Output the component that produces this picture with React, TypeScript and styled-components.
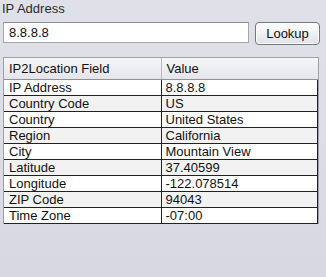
import React, { useState } from 'react';
import styled, { createGlobalStyle } from 'styled-components';

const GlobalStyle = createGlobalStyle`
  html, body {
    margin: 0;
    padding: 0;
    background: #dadbe4;
  }
  body {
    font-family: "Liberation Sans", Arial, sans-serif;
  }
`;

const Page = styled.div`
  width: 326px;
  height: 277px;
  box-sizing: border-box;
  padding: 1px 6px 0 3px;
  background: linear-gradient(#e0e1e8, #d7d8e2);
`;

const FieldLabel = styled.div`
  font-size: 13px;
  line-height: 16px;
  color: #2a2a2a;
  margin-left: -1px;
`;

const SearchRow = styled.div`
  display: flex;
  align-items: flex-start;
  gap: 6px;
  margin-top: 5px;
`;

const IpInput = styled.input`
  box-sizing: border-box;
  width: 246px;
  height: 21px;
  border: 1px solid #a4a6ad;
  border-top-color: #8c8e95;
  background: #fff;
  font-family: "Liberation Sans", Arial, sans-serif;
  font-size: 13px;
  color: #111;
  padding: 0 5px;
  outline: none;
`;

const LookupButton = styled.button`
  box-sizing: border-box;
  width: 65px;
  height: 23px;
  border: 1px solid #6f7888;
  border-radius: 4px;
  background: linear-gradient(#ffffff, #f1f2f5 45%, #dfe1e7);
  box-shadow: inset 0 0 0 1px #fdfdfe;
  font-family: "Liberation Sans", Arial, sans-serif;
  font-size: 13px;
  color: #111;
  padding: 0;
  cursor: pointer;
`;

const TableFrame = styled.div`
  margin-top: 12px;
  width: 316px;
  box-sizing: border-box;
  border: 1px solid #9ea0a8;
  border-bottom: none;
  background: #dadbe4;
`;

const Grid = styled.table`
  width: 314px;
  border-collapse: collapse;
  table-layout: fixed;
  font-size: 13px;
  color: #111;
`;

const HeadCell = styled.th`
  height: 21px;
  padding: 0 0 0 5px;
  text-align: left;
  font-weight: normal;
  background: linear-gradient(#f6f6f8, #e4e5ea);
  border-right: 1px solid #b8bac0;
  border-bottom: 1px solid #8e9097;
  &:last-child {
    border-right: none;
  }
`;

const Row = styled.tr<{ $shade: boolean }>`
  background: ${p => (p.$shade ? '#f2f2f2' : '#ffffff')};
`;

const Cell = styled.td`
  height: 15px;
  padding: 0 0 0 5px;
  line-height: 15px;
  border-bottom: 1px solid #222;
  border-right: 1px solid #222;
  border-left: 1px solid #222;
  white-space: nowrap;
  overflow: hidden;
  &:first-child {
    border-left: none;
  }
  &:last-child {
    padding-left: 4px;
  }
`;

const results: [string, string][] = [
  ['IP Address', '8.8.8.8'],
  ['Country Code', 'US'],
  ['Country', 'United States'],
  ['Region', 'California'],
  ['City', 'Mountain View'],
  ['Latitude', '37.40599'],
  ['Longitude', '-122.078514'],
  ['ZIP Code', '94043'],
  ['Time Zone', '-07:00'],
];

export default function App(): JSX.Element {
  const [ip, setIp] = useState<string>('8.8.8.8');

  return (
    <Page>
      <GlobalStyle />
      <FieldLabel>IP Address</FieldLabel>
      <SearchRow>
        <IpInput value={ip} onChange={e => setIp(e.target.value)} />
        <LookupButton>Lookup</LookupButton>
      </SearchRow>
      <TableFrame>
        <Grid>
          <colgroup>
            <col style={{ width: 157 }} />
            <col />
          </colgroup>
          <thead>
            <tr>
              <HeadCell>IP2Location Field</HeadCell>
              <HeadCell>Value</HeadCell>
            </tr>
          </thead>
          <tbody>
            {results.map(([field, value], i) => (
              <Row key={field} $shade={i % 2 === 1}>
                <Cell>{field}</Cell>
                <Cell>{value}</Cell>
              </Row>
            ))}
          </tbody>
        </Grid>
      </TableFrame>
    </Page>
  );
}
